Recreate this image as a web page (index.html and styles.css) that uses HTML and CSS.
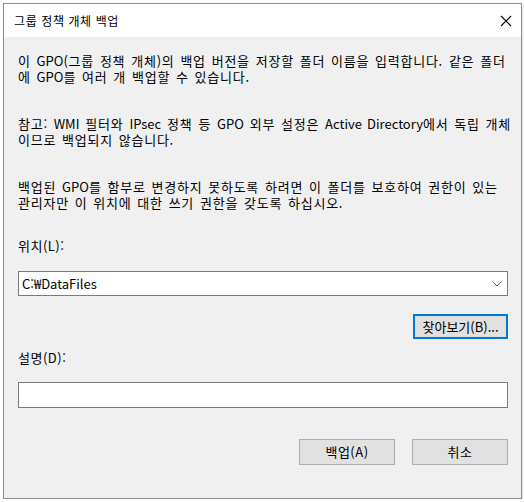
FILE: index.html
```html
<!DOCTYPE html>
<html lang="ko">
<head>
<meta charset="utf-8">
<link rel="stylesheet" href="styles.css">
</head>
<body>
<div class="dialog">
  <div class="titlebar">
    <span class="title">그룹 정책 개체 백업</span>
    <svg class="close" width="12" height="12" viewBox="0 0 12 12"><path d="M1 1 L11 11 M11 1 L1 11" stroke="#000" stroke-width="1.1" fill="none"/></svg>
  </div>
  <div class="content">
    <p class="para">이 <span class="lat">GPO</span>(그룹 정책 개체)의 백업 버전을 저장할 폴더 이름을 입력합니다. 같은 폴더<br>에 <span class="lat">GPO</span>를 여러 개 백업할 수 있습니다.</p>
    <p class="para">참고: <span class="lat">WMI</span> 필터와 <span class="lat">IPsec</span> 정책 등 <span class="lat">GPO</span> 외부 설정은 <span class="lat">Active Directory</span>에서 독립 개체<br>이므로 백업되지 않습니다.</p>
    <p class="para">백업된 <span class="lat">GPO</span>를 함부로 변경하지 못하도록 하려면 이 폴더를 보호하여 권한이 있는<br>관리자만 이 위치에 대한 쓰기 권한을 갖도록 하십시오.</p>
    <div class="label label-loc">위치(L):</div>
    <div class="combo">
      <span class="combo-text">C:₩DataFiles</span>
      <svg class="chevron" width="10" height="6" viewBox="0 0 10 6"><path d="M0.5 0.5 L5 5 L9.5 0.5" stroke="#606060" stroke-width="1" fill="none"/></svg>
    </div>
    <div class="row-right row-browse">
      <div class="btn btn-focus">찾아보기(B)...</div>
    </div>
    <div class="label label-desc">설명(D):</div>
    <div class="textbox"></div>
    <div class="row-right row-actions">
      <div class="btn">백업(A)</div>
      <div class="btn">취소</div>
    </div>
  </div>
</div>
</body>
</html>
```

FILE: styles.css
```css
html, body {
  margin: 0;
  padding: 0;
  background: #ffffff;
}
body {
  font-family: "Noto Sans CJK KR", "Noto Sans", sans-serif;
  font-size: 13px;
  letter-spacing: 0.5px;
  color: #000;
}
.dialog {
  margin: 3px 0 0 3px;
  width: 517px;
  height: 494px;
  border: 1px solid #8e8e8e;
  background: #f0f0f0;
  display: flex;
  flex-direction: column;
  box-shadow: 1px 1px 2px rgba(0,0,0,0.15);
}
.titlebar {
  height: 33px;
  background: #ffffff;
  display: flex;
  align-items: center;
  justify-content: space-between;
  padding: 0 9px 0 10px;
}
.title {
  font-size: 12px;
  line-height: 16px;
  letter-spacing: 0.6px;
}
.close {
  display: block;
  margin-top: 1px;
}
.content {
  padding: 16px 13px 0 14px;
  display: flex;
  flex-direction: column;
}
.para {
  margin: 0 0 31px 0;
  line-height: 16px;
  white-space: nowrap;
  letter-spacing: 0.75px;
  word-spacing: 1.5px;
}
.lat {
  letter-spacing: 0;
}
.para:nth-of-type(3) {
  margin-bottom: 27px;
}
.label {
  line-height: 16px;
}
.combo {
  margin-top: 17px;
  height: 23px;
  border: 1px solid #7a7a7a;
  background: #fff;
  display: flex;
  align-items: center;
  justify-content: space-between;
  padding: 0 5px 0 3px;
}
.combo-text {
  line-height: 16px;
  letter-spacing: 0;
}
.chevron {
  display: block;
}
.row-right {
  display: flex;
  justify-content: flex-end;
  gap: 17px;
}
.row-browse {
  margin-top: 18px;
}
.btn {
  width: 93px;
  height: 23px;
  border: 1px solid #adadad;
  background: #e1e1e1;
  display: flex;
  align-items: center;
  justify-content: center;
  line-height: 16px;
}
.btn-focus {
  border: 2px solid #0078d7;
  width: 91px;
  height: 21px;
  letter-spacing: 0;
}
.label-desc {
  margin-top: 11px;
}
.textbox {
  margin-top: 16px;
  height: 24px;
  border: 1px solid #7a7a7a;
  background: #fff;
}
.row-actions {
  margin-top: 31px;
}
.row-actions .btn {
  width: 94px;
  height: 24px;
}
```
